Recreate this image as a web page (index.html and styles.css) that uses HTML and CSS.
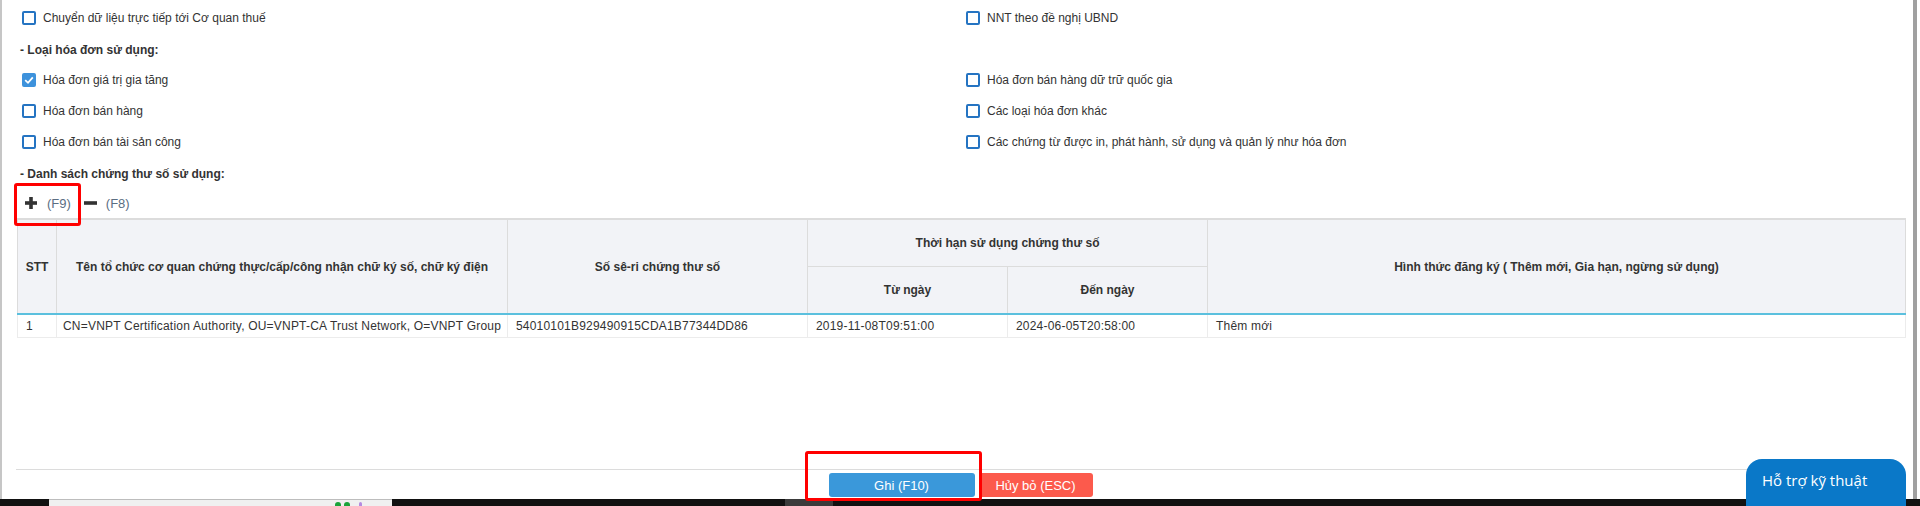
FILE: index.html
```html
<!DOCTYPE html>
<html lang="vi">
<head>
    <meta charset="UTF-8">
    <title>Đăng ký sử dụng hóa đơn điện tử</title>
    <link rel="stylesheet" href="styles.css">
</head>
<body>
<div class="window">
    <div class="frame">
        <div class="main">
            <div class="options">
                <label class="opt"><span class="cb"></span>Chuyển dữ liệu trực tiếp tới Cơ quan thuế</label>
                <label class="opt"><span class="cb"></span>NNT theo đề nghị UBND</label>

                <div class="group-title">- Loại hóa đơn sử dụng:</div>
                <label class="opt"><span class="cb on"><svg width="10" height="10" viewBox="0 0 10 10"><path d="M1.2 5.2 L4 7.8 L8.8 2.4" fill="none" stroke="#fff" stroke-width="1.8"/></svg></span>Hóa đơn giá trị gia tăng</label>
                <label class="opt"><span class="cb"></span>Hóa đơn bán hàng dữ trữ quốc gia</label>
                <label class="opt"><span class="cb"></span>Hóa đơn bán hàng</label>
                <label class="opt"><span class="cb"></span>Các loại hóa đơn khác</label>
                <label class="opt"><span class="cb"></span>Hóa đơn bán tài sản công</label>
                <label class="opt"><span class="cb"></span>Các chứng từ được in, phát hành, sử dụng và quản lý như hóa đơn</label>

                <div class="group-title">- Danh sách chứng thư số sử dụng:</div>
            </div>

            <div class="toolbar">
                <span class="mark mark-add"></span>
                <svg class="ico" width="12" height="12" viewBox="0 0 12 12"><rect x="0" y="4.2" width="12" height="3.6" fill="#333"/><rect x="4.2" y="0" width="3.6" height="12" fill="#333"/></svg>
                <span class="key">(F9)</span>
                <svg class="ico" width="13" height="12" viewBox="0 0 13 12"><rect x="0" y="4.2" width="13" height="3.6" fill="#333"/></svg>
                <span class="key key-last">(F8)</span>
            </div>

            <table class="certs">
                <colgroup>
                    <col class="c-stt">
                    <col class="c-name">
                    <col class="c-serial">
                    <col class="c-date">
                    <col class="c-date2">
                    <col class="c-kind">
                </colgroup>
                <thead>
                <tr class="r1">
                    <th rowspan="2">STT</th>
                    <th rowspan="2">Tên tổ chức cơ quan chứng thực/cấp/công nhận chữ ký số, chữ ký điện</th>
                    <th rowspan="2">Số sê-ri chứng thư số</th>
                    <th colspan="2">Thời hạn sử dụng chứng thư số</th>
                    <th rowspan="2">Hình thức đăng ký ( Thêm mới, Gia hạn, ngừng sử dụng)</th>
                </tr>
                <tr class="r2">
                    <th>Từ ngày</th>
                    <th>Đến ngày</th>
                </tr>
                </thead>
                <tbody>
                <tr>
                    <td>1</td>
                    <td>CN=VNPT Certification Authority, OU=VNPT-CA Trust Network, O=VNPT Group</td>
                    <td>54010101B929490915CDA1B77344DD86</td>
                    <td>2019-11-08T09:51:00</td>
                    <td>2024-06-05T20:58:00</td>
                    <td>Thêm mới</td>
                </tr>
                </tbody>
            </table>
        </div>

        <div class="footer">
            <div class="save-wrap">
                <span class="mark mark-save"></span>
                <button class="btn btn-save" type="button">Ghi (F10)</button>
            </div>
            <button class="btn btn-cancel" type="button">Hủy bỏ (ESC)</button>
        </div>
    </div>
    <div class="vscroll"></div>
</div>

<div class="taskbar">
    <div class="tb-search">
        <span class="tb-dot green"></span><span class="tb-dot green"></span><span class="tb-dot violet"></span>
    </div>
    <div class="tb-app"></div>
</div>

<div class="help">Hỗ trợ kỹ thuật</div>
</body>
</html>
```

FILE: styles.css
```css
* {
    box-sizing: border-box;
}

body {
    margin: 0;
    height: 506px;
    overflow: hidden;
    background: #fff;
    color: #333;
    font-family: "Liberation Sans", Arial, sans-serif;
    font-size: 12px;
}

.window {
    display: flex;
    height: 499px;
}

.frame {
    flex: 1;
    display: flex;
    flex-direction: column;
    border-left: 2px solid #c6c6c6;
}

.main {
    flex: 1;
}

.vscroll {
    width: 4px;
    margin-right: 3px;
    background: #a0a0a0;
}

/* checkbox lists */
.options {
    display: grid;
    grid-template-columns: 944px 1fr;
    grid-auto-rows: 31px;
    padding: 2px 0 0 18px;
}

.opt {
    display: flex;
    align-items: center;
    gap: 7px;
    white-space: nowrap;
}

.cb {
    display: flex;
    align-items: center;
    justify-content: center;
    width: 14px;
    height: 14px;
    margin-left: 2px;
    border: 2px solid #2574c2;
    border-radius: 2px;
    background: #fff;
}

.cb.on {
    border-color: #3d92dc;
    background: #3d92dc;
}

.group-title {
    grid-column: 1 / -1;
    display: flex;
    align-items: center;
    font-weight: bold;
    padding-top: 2px;
}

/* add / remove row */
.toolbar {
    position: relative;
    display: flex;
    align-items: center;
    height: 30px;
    padding-left: 23px;
}

.key {
    color: #5b6e82;
    font-size: 13px;
    margin: 0 13px 0 10px;
}

.key-last {
    margin-left: 9px;
}

.mark {
    position: absolute;
    border: 3px solid #f00;
    border-radius: 3px;
}

.mark-add {
    left: 12px;
    top: -5px;
    width: 67px;
    height: 43px;
}

/* certificate table */
.certs {
    border-collapse: collapse;
    table-layout: fixed;
    width: 1888px;
    margin-left: 15px;
    border-top: 2px solid #dcdcdc;
}

.c-stt { width: 39px; }
.c-name { width: 451px; }
.c-serial { width: 300px; }
.c-date { width: 200px; }
.c-date2 { width: 200px; }
.c-kind { width: 698px; }

.certs thead {
    border-bottom: 2px solid #5bc0de;
}

.certs th {
    background: #f2f3f7;
    border: 1px solid #dcdcdc;
    font-weight: bold;
    text-align: center;
    padding: 0;
    white-space: nowrap;
}

.certs .r1 {
    height: 47px;
}

.certs .r2 {
    height: 48px;
}

.certs td {
    height: 23px;
    padding: 0 8px;
    border: 1px solid #ececec;
    white-space: nowrap;
    letter-spacing: 0.2px;
    overflow: visible;
}

.certs td:nth-child(2) {
    padding-left: 6px;
}

/* bottom buttons */
.footer {
    display: flex;
    justify-content: center;
    gap: 4px;
    height: 30px;
    margin: 0 8px 0 14px;
    padding-top: 3px;
    border-top: 1px solid #dcdcdc;
}

.save-wrap {
    position: relative;
}

.mark-save {
    left: -24px;
    top: -22px;
    width: 177px;
    height: 50px;
}

.btn {
    height: 24px;
    border: 0;
    border-radius: 3px;
    color: #fff;
    font-family: "Liberation Sans", Arial, sans-serif;
    font-size: 13px;
    padding: 0;
}

.btn-save {
    width: 146px;
    background: #3a98da;
}

.btn-cancel {
    width: 114px;
    background: #fc5a4c;
}

/* windows taskbar peeking in */
.taskbar {
    display: flex;
    height: 7px;
    background: #111;
}

.tb-search {
    display: flex;
    align-items: flex-end;
    justify-content: flex-end;
    gap: 3px;
    width: 343px;
    margin-left: 49px;
    padding-right: 30px;
    background: #f0f0f0;
    border-top: 1px solid #bdbdbd;
}

.tb-dot {
    width: 6px;
    height: 4px;
    border-radius: 3px 3px 0 0;
}

.tb-dot.green { background: #1aa33a; }
.tb-dot.violet { background: #b48be0; margin-left: 6px; width: 3px; }

.tb-app {
    width: 48px;
    margin-left: 393px;
    background: #3b3b3b;
}

.help {
    position: fixed;
    right: 14px;
    bottom: 0;
    width: 160px;
    height: 47px;
    padding: 11px 0 0 16px;
    border-radius: 16px 16px 0 0;
    background: #0a78c8;
    color: #fff;
    font-family: "Open Sans", "Noto Sans", sans-serif;
    font-size: 15px;
}
```
